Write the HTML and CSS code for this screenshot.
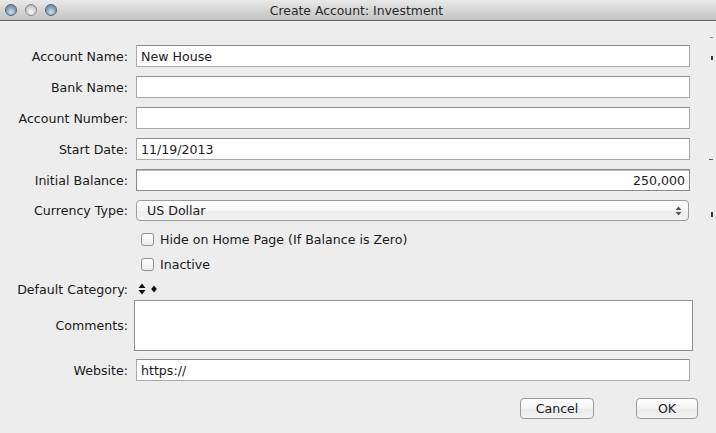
FILE: index.html
```html
<!DOCTYPE html>
<html>
<head>
<meta charset="utf-8">
<link rel="stylesheet" href="styles.css">
</head>
<body>
<div class="window">
  <div class="titlebar">
    <div class="lights">
      <span class="light blue"></span>
      <span class="light gray"></span>
      <span class="light blue"></span>
    </div>
    <div class="title">Create Account: Investment</div>
  </div>
  <div class="form">
    <div class="row">
      <label class="lbl">Account Name:</label>
      <div class="field">New House</div>
    </div>
    <div class="row g9">
      <label class="lbl">Bank Name:</label>
      <div class="field"></div>
    </div>
    <div class="row g9">
      <label class="lbl">Account Number:</label>
      <div class="field"></div>
    </div>
    <div class="row g9">
      <label class="lbl">Start Date:</label>
      <div class="field">11/19/2013</div>
    </div>
    <div class="row g9">
      <label class="lbl">Initial Balance:</label>
      <div class="field focus right">250,000</div>
    </div>
    <div class="row g9">
      <label class="lbl">Currency Type:</label>
      <div class="select">
        <span>US Dollar</span>
        <svg class="updown" width="7" height="10" viewBox="0 0 7 10"><path d="M3.5 0.5 L6.5 4 L0.5 4 Z M0.5 6 L6.5 6 L3.5 9.5 Z" fill="#555"/></svg>
      </div>
    </div>
    <div class="row g12 check-row">
      <span class="lbl"></span>
      <span class="check"></span>
      <span class="check-text">Hide on Home Page (If Balance is Zero)</span>
    </div>
    <div class="row g12 check-row">
      <span class="lbl"></span>
      <span class="check"></span>
      <span class="check-text">Inactive</span>
    </div>
    <div class="row g12 cat-row">
      <label class="lbl">Default Category:</label>
      <div class="cat">
        <svg width="8" height="12" viewBox="0 0 8 12"><path d="M4 0.5 L7.5 5 L0.5 5 Z M0.5 7 L7.5 7 L4 11.5 Z" fill="#111"/></svg>
        <svg width="6" height="8" viewBox="0 0 6 8"><path d="M3 0.5 L5.8 4 L3 7.5 L0.2 4 Z" fill="#111"/></svg>
      </div>
    </div>
    <div class="row g5 comments-row">
      <label class="lbl">Comments:</label>
      <div class="textarea"></div>
    </div>
    <div class="row g8">
      <label class="lbl">Website:</label>
      <div class="field">https://</div>
    </div>
    <div class="buttons">
      <button class="btn cancel">Cancel</button>
      <button class="btn ok">OK</button>
    </div>
  </div>
  <span class="edge e1"></span>
  <span class="edge e2"></span>
  <span class="edge e3"></span>
  <span class="edge e4"></span>
</div>
</body>
</html>
```

FILE: styles.css
```css
html, body {
  margin: 0;
  padding: 0;
}
body {
  font-family: "DejaVu Sans", "Liberation Sans", sans-serif;
  font-size: 12.6px;
  color: #1a1a1a;
  background: #ededed;
}
.window {
  position: relative;
  width: 716px;
  height: 433px;
  background: #ededed;
  overflow: hidden;
}
.titlebar {
  height: 20px;
  border-bottom: 1px solid #5e5e5e;
  background: linear-gradient(#e9e9e9, #d2d2d2 60%, #c3c3c3);
  display: flex;
  align-items: center;
  position: relative;
}
.lights {
  display: flex;
  gap: 8px;
  padding-left: 5px;
}
.light {
  width: 12px;
  height: 12px;
  border-radius: 50%;
  box-sizing: border-box;
}
.light.blue {
  border: 1px solid #4f6273;
  background: radial-gradient(circle at 50% 70%, #cfe0ee 0%, #8ca6bd 50%, #5b7488 100%);
}
.light.gray {
  border: 1px solid #888;
  background: radial-gradient(circle at 50% 70%, #f6f6f6 0%, #d6d6d6 50%, #a4a4a4 100%);
}
.title {
  flex: 1;
  text-align: center;
  font-size: 12.4px;
  color: #2a2a2a;
  margin-right: 60px;
}
.form {
  display: flex;
  flex-direction: column;
  padding-top: 24px;
}
.row {
  display: flex;
  align-items: center;
}
.g9 { margin-top: 9px; }
.g12 { margin-top: 12px; }
.g5 { margin-top: 5px; }
.g8 { margin-top: 8px; }
.lbl {
  width: 128px;
  flex: none;
  text-align: right;
  white-space: nowrap;
  color: #1a1a1a;
  line-height: 14px;
  padding-top: 1px;
}
.field {
  margin-left: 8px;
  width: 554px;
  height: 22px;
  box-sizing: border-box;
  border: 1px solid #a9a9a9;
  border-top-color: #8c8c8c;
  background: #fff;
  padding: 1px 4px 0;
  line-height: 20px;
  white-space: nowrap;
}
.field.focus {
  border: 1px solid #8a8a8a;
  box-shadow: inset 0 1px 1px #b8b8b8;
}
.field.right {
  text-align: right;
}
.select {
  margin-left: 8px;
  width: 553px;
  height: 21px;
  box-sizing: border-box;
  border: 1px solid #9b9b9b;
  border-radius: 4px;
  background: linear-gradient(#ffffff, #f6f6f6 50%, #ececec 51%, #f4f4f4);
  display: flex;
  align-items: center;
  justify-content: space-between;
  padding: 0 6px 0 10px;
}
.updown {
  display: block;
}
.check-row {
  height: 13px;
}
.check {
  margin-left: 13px;
  width: 13px;
  height: 13px;
  box-sizing: border-box;
  border: 1px solid #8f8f8f;
  border-radius: 3px;
  background: linear-gradient(#fdfdfd, #ececec);
  flex: none;
}
.check-text {
  margin-left: 6px;
  white-space: nowrap;
}
.cat-row {
  height: 12px;
}
.cat {
  margin-left: 10px;
  display: flex;
  align-items: center;
  gap: 5px;
}
.cat svg {
  display: block;
}
.comments-row {
  align-items: center;
}
.textarea {
  margin-left: 6px;
  width: 559px;
  height: 51px;
  box-sizing: border-box;
  border: 1px solid #8f8f8f;
  background: #fff;
}
.buttons {
  display: flex;
  justify-content: flex-end;
  gap: 42px;
  padding-right: 18px;
  margin-top: 17px;
}
.btn {
  font-family: "DejaVu Sans", "Liberation Sans", sans-serif;
  font-size: 12.6px;
  color: #1a1a1a;
  height: 21px;
  box-sizing: border-box;
  border: 1px solid #9a9a9a;
  border-radius: 4px;
  background: linear-gradient(#ffffff, #f3f3f3 50%, #e9e9e9 51%, #f2f2f2);
  padding: 0;
  line-height: 19px;
}
.btn.cancel { width: 74px; }
.btn.ok { width: 62px; }
.edge {
  position: absolute;
  right: 3px;
  width: 2px;
  background: #333;
}
.e1 { top: 37px; height: 1px; width: 3px; background: #888; }
.e2 { top: 56px; height: 4px; }
.e3 { top: 159px; height: 1px; width: 4px; background: #555; }
.e4 { top: 212px; height: 5px; }
```
